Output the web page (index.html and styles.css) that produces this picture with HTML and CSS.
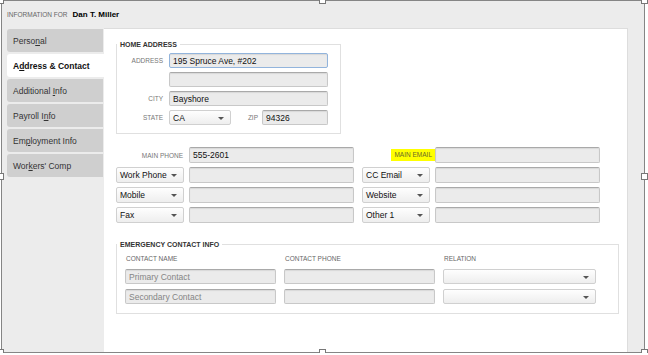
FILE: index.html
```html
<!DOCTYPE html>
<html lang="en">

<head>
    <meta charset="UTF-8">
    <meta name="viewport" content="width=device-width, initial-scale=1.0">
    <title>Employee Information</title>
    <link rel="stylesheet" href="styles.css">
</head>

<body>
    <div class="frame">
        <!-- Header -->
        <div class="info-bar">
            <span class="info-label">INFORMATION FOR</span>
            <span class="info-name">Dan T. Miller</span>
        </div>

        <div class="main-row">
            <!-- Tabs -->
            <ul class="tabs">
                <li class="tab"><span>Perso<u>n</u>al</span></li>
                <li class="tab active"><span>A<u>d</u>dress &amp; Contact</span></li>
                <li class="tab"><span>Additional <u>I</u>nfo</span></li>
                <li class="tab"><span>Payroll I<u>n</u>fo</span></li>
                <li class="tab"><span>Em<u>p</u>loyment Info</span></li>
                <li class="tab"><span>Wor<u>k</u>ers' Comp</span></li>
            </ul>

            <!-- Panel -->
            <main class="panel">
                <fieldset class="group home">
                    <legend>HOME ADDRESS</legend>
                    <div class="address-grid">
                        <span class="label">Address</span>
                        <div class="field focus">195 Spruce Ave, #202</div>
                        <span class="label"></span>
                        <div class="field"></div>
                        <span class="label">City</span>
                        <div class="field">Bayshore</div>
                        <span class="label">State</span>
                        <div class="state-row">
                            <div class="select state">CA</div>
                            <div class="zip-group">
                                <span class="label">Zip</span>
                                <div class="field zip">94326</div>
                            </div>
                        </div>
                    </div>
                </fieldset>

                <div class="phone-list">
                    <div class="phone-row">
                        <div class="pair">
                            <span class="label main-label">Main Phone</span>
                            <div class="field">555-2601</div>
                        </div>
                        <div class="pair">
                            <span class="label main-label"><span class="highlight">Main Email</span></span>
                            <div class="field"></div>
                        </div>
                    </div>
                    <div class="phone-row">
                        <div class="pair">
                            <div class="select">Work Phone</div>
                            <div class="field"></div>
                        </div>
                        <div class="pair">
                            <div class="select">CC Email</div>
                            <div class="field"></div>
                        </div>
                    </div>
                    <div class="phone-row">
                        <div class="pair">
                            <div class="select">Mobile</div>
                            <div class="field"></div>
                        </div>
                        <div class="pair">
                            <div class="select">Website</div>
                            <div class="field"></div>
                        </div>
                    </div>
                    <div class="phone-row">
                        <div class="pair">
                            <div class="select">Fax</div>
                            <div class="field"></div>
                        </div>
                        <div class="pair">
                            <div class="select">Other 1</div>
                            <div class="field"></div>
                        </div>
                    </div>
                </div>

                <fieldset class="group emergency">
                    <legend>EMERGENCY CONTACT INFO</legend>
                    <div class="contact-grid">
                        <span class="col-head">Contact Name</span>
                        <span class="col-head">Contact Phone</span>
                        <span class="col-head">Relation</span>

                        <div class="field placeholder">Primary Contact</div>
                        <div class="field"></div>
                        <div class="select"></div>

                        <div class="field placeholder">Secondary Contact</div>
                        <div class="field"></div>
                        <div class="select"></div>
                    </div>
                </fieldset>
            </main>
        </div>

        <!-- Selection handles -->
        <span class="handle tl"></span>
        <span class="handle tm"></span>
        <span class="handle tr"></span>
        <span class="handle ml"></span>
        <span class="handle mr"></span>
        <span class="handle bl"></span>
        <span class="handle bm"></span>
        <span class="handle br"></span>
    </div>
</body>

</html>
```

FILE: styles.css
```css
/* General Styles */
body {
    margin: 0;
    padding: 0;
    background: #fff;
    font-family: "Liberation Sans", Arial, sans-serif;
    color: #222;
}

/* Outer frame */
.frame {
    position: relative;
    margin-left: 1px;
    width: 644px;
    height: 353px;
    box-sizing: border-box;
    border: 1px solid #858585;
    background: #ececec;
    display: flex;
    flex-direction: column;
}

.info-bar {
    height: 27px;
    box-sizing: border-box;
    padding: 0 0 1px 5px;
    display: flex;
    align-items: center;
    gap: 5px;
}

.info-label {
    font-size: 6.5px;
    color: #666;
}

.info-name {
    font-size: 8px;
    font-weight: bold;
    color: #000;
}

.main-row {
    flex: 1;
    display: flex;
    min-height: 0;
}

/* Tabs */
.tabs {
    list-style: none;
    margin: 0;
    padding: 1px 0 0 5px;
    width: 102px;
    box-sizing: border-box;
    display: flex;
    flex-direction: column;
    gap: 2px;
}

.tab {
    height: 23px;
    width: 96px;
    box-sizing: border-box;
    padding-left: 6px;
    display: flex;
    align-items: center;
    background: #cfcfcf;
    border-radius: 3px 0 0 3px;
    font-size: 8.5px;
    color: #333;
}

.tab u {
    text-underline-offset: 1px;
}

.tab.active {
    width: 97px;
    background: #fff;
    font-weight: bold;
    color: #111;
}

/* Panel */
.panel {
    flex: 1;
    margin-right: 16px;
    background: #fff;
    border-top: 1px solid #dddddd;
    border-right: 1px solid #dddddd;
    padding: 11px 0 0 12px;
}

.group {
    margin: 0;
    padding: 4px 0 8px 0;
    border: 1px solid #e0e0e0;
    box-sizing: border-box;
    min-width: 0;
}

.group legend {
    padding: 0 3px;
    font-size: 7px;
    line-height: 9px;
    font-weight: bold;
    color: #333;
}

.home {
    width: 225px;
}

.label {
    font-size: 6.5px;
    color: #777;
    text-transform: uppercase;
    text-align: right;
}

.address-grid {
    display: grid;
    grid-template-columns: 46px 159px;
    column-gap: 6px;
    row-gap: 4px;
    align-items: center;
}

.state-row {
    display: flex;
    justify-content: space-between;
    align-items: center;
}

.zip-group {
    display: flex;
    align-items: center;
    gap: 4px;
}

/* Inputs */
.field {
    height: 15px;
    box-sizing: border-box;
    padding: 0 3px;
    display: flex;
    align-items: center;
    background: #ebebeb;
    border: 1px solid #c8c8c8;
    border-top-color: #a9a9a9;
    border-radius: 2px;
    box-shadow: inset 0 1px 1px rgba(0, 0, 0, 0.08);
    font-size: 8.5px;
    color: #111;
    white-space: nowrap;
}

.field.focus {
    border-color: #92b4dc;
}

.field.placeholder {
    color: #858585;
}

.select {
    position: relative;
    height: 15px;
    box-sizing: border-box;
    padding: 0 14px 0 3px;
    display: flex;
    align-items: center;
    background: linear-gradient(#fefefe, #eeeeee);
    border: 1px solid #d0d0d0;
    border-radius: 2px;
    font-size: 8.5px;
    color: #111;
}

.select::after {
    content: "";
    position: absolute;
    right: 6px;
    top: 50%;
    margin-top: -1px;
    border-left: 3px solid transparent;
    border-right: 3px solid transparent;
    border-top: 3px solid #555;
}

.state {
    width: 62px;
}

.zip {
    width: 66px;
}

/* Phone & email rows */
.phone-list {
    margin-top: 13px;
    display: flex;
    flex-direction: column;
    gap: 4px;
}

.phone-row {
    display: flex;
    gap: 8px;
}

.pair {
    display: grid;
    grid-template-columns: 68px 165px;
    column-gap: 5px;
    align-items: center;
}

.phone-row .field,
.phone-row .select {
    height: 16px;
}

.main-label {
    padding-right: 1px;
}

.highlight {
    display: inline-block;
    margin-right: -6px;
    padding: 0 3px;
    line-height: 12px;
    background: #ffff00;
    color: #6b6b2a;
}

/* Emergency contacts */
.emergency {
    width: 503px;
    margin-top: 17px;
    padding: 5px 0 9px 0;
}

.contact-grid {
    margin-left: 8px;
    display: grid;
    grid-template-columns: 151px 151px 153px;
    column-gap: 8px;
    row-gap: 5px;
}

.col-head {
    padding-left: 1px;
    font-size: 6.5px;
    line-height: 10px;
    color: #666;
    text-transform: uppercase;
}

/* Selection handles */
.handle {
    position: absolute;
    width: 5px;
    height: 5px;
    background: #fff;
    border: 1px solid #777;
}

.handle.tl { left: -5px; top: -4px; }
.handle.tm { left: calc(50% - 4px); top: -4px; }
.handle.tr { right: -4px; top: -4px; }
.handle.ml { left: -5px; top: calc(50% - 4px); }
.handle.mr { right: -4px; top: calc(50% - 4px); }
.handle.bl { left: -5px; bottom: -4px; }
.handle.bm { left: calc(50% - 4px); bottom: -4px; }
.handle.br { right: -4px; bottom: -4px; }
```
